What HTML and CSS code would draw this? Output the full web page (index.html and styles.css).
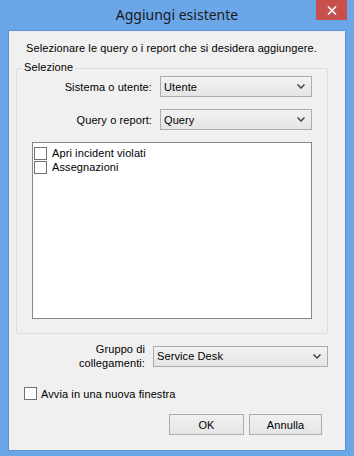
FILE: index.html
```html
<!DOCTYPE html>
<html>
<head>
<meta charset="utf-8">
<link rel="stylesheet" href="styles.css">
</head>
<body>
<div class="window">
  <div class="titlebar">
    <span class="title">Aggiungi esistente</span>
    <span class="close"><svg width="10" height="9" viewBox="0 0 10 9"><path d="M1 0.5 L9 8.5 M9 0.5 L1 8.5" stroke="#fff" stroke-width="1.6" fill="none"/></svg></span>
  </div>
  <div class="client">
    <p class="intro">Selezionare le query o i report che si desidera aggiungere.</p>
    <div class="group">
      <span class="caption">Selezione</span>
      <div class="row">
        <span class="label">Sistema o utente:</span>
        <div class="combo"><span>Utente</span><svg class="arrow" width="8" height="5" viewBox="0 0 8 5"><path d="M0.5 0.5 L4 4 L7.5 0.5" stroke="#444" stroke-width="1.5" fill="none"/></svg></div>
      </div>
      <div class="row">
        <span class="label">Query o report:</span>
        <div class="combo"><span>Query</span><svg class="arrow" width="8" height="5" viewBox="0 0 8 5"><path d="M0.5 0.5 L4 4 L7.5 0.5" stroke="#444" stroke-width="1.5" fill="none"/></svg></div>
      </div>
      <div class="list">
        <div class="item"><span class="cb"></span>Apri incident violati</div>
        <div class="item"><span class="cb"></span>Assegnazioni</div>
      </div>
    </div>
    <div class="row links">
      <span class="label">Gruppo di<br>collegamenti:</span>
      <div class="combo"><span>Service Desk</span><svg class="arrow" width="8" height="5" viewBox="0 0 8 5"><path d="M0.5 0.5 L4 4 L7.5 0.5" stroke="#444" stroke-width="1.5" fill="none"/></svg></div>
    </div>
    <div class="check"><span class="cb"></span>Avvia in una nuova finestra</div>
    <div class="buttons">
      <button class="btn">OK</button>
      <button class="btn cancel">Annulla</button>
    </div>
  </div>
</div>
</body>
</html>
```
FILE: styles.css
```css
html, body {
  margin: 0;
  padding: 0;
}
body {
  width: 354px;
  height: 456px;
  overflow: hidden;
  background: #6aa6e8;
  font-family: "Liberation Sans", Arial, sans-serif;
  font-size: 11px;
  letter-spacing: 0.1px;
  color: #000;
}
.window {
  display: flex;
  flex-direction: column;
  height: 456px;
}
.titlebar {
  position: relative;
  height: 30px;
  display: flex;
  align-items: center;
  justify-content: center;
}
.title {
  font-family: "Noto Sans", sans-serif;
  font-size: 14px;
  letter-spacing: 0;
  color: #1a1a1a;
  margin-top: -1px;
}
.close {
  position: absolute;
  top: 0;
  right: 7px;
  width: 31px;
  height: 20px;
  background: #c7504d;
  display: flex;
  align-items: center;
  justify-content: center;
}
.client {
  margin: 0 8px;
  height: 421px;
  box-sizing: border-box;
  background: #f0f0f0;
  border: 1px solid #5d94d2;
  padding: 0 0 0 7px;
}
.intro {
  margin: 11px 0 0 10px;
  line-height: 13px;
}
.group {
  position: relative;
  margin-top: 13px;
  width: 312px;
  height: 266px;
  box-sizing: border-box;
  border: 1px solid #d5dfe5;
  border-radius: 2px;
  padding: 7px 0 0 15px;
}
.caption {
  position: absolute;
  left: 5px;
  top: -8px;
  padding: 0 2px;
  background: #f0f0f0;
  line-height: 13px;
}
.row {
  display: flex;
  align-items: center;
  margin-bottom: 12px;
}
.label {
  width: 120px;
  text-align: right;
  margin-right: 8px;
  line-height: 14px;
}
.combo {
  position: relative;
  width: 152px;
  height: 21px;
  box-sizing: border-box;
  border: 1px solid #acacac;
  background: linear-gradient(#f2f2f2, #e5e5e5);
  display: flex;
  align-items: center;
  padding-left: 3px;
}
.combo span {
  flex: 1;
}
.arrow {
  margin-right: 6px;
}
.list {
  width: 280px;
  height: 177px;
  box-sizing: border-box;
  border: 1px solid #828790;
  background: #fff;
  padding: 3px 0 0 1px;
}
.item {
  display: flex;
  align-items: center;
  height: 14px;
}
.cb {
  width: 13px;
  height: 13px;
  box-sizing: border-box;
  border: 1px solid #707070;
  background: #fff;
  margin-right: 5px;
}
.links {
  margin: 8px 0 0 0;
}
.links .label {
  width: 129px;
}
.links .combo {
  width: 175px;
}
.check {
  display: flex;
  align-items: center;
  margin: 17px 0 0 8px;
}
.check .cb {
  margin-right: 4px;
}
.buttons {
  display: flex;
  gap: 5px;
  margin: 14px 0 0 153px;
}
.btn {
  width: 75px;
  height: 21px;
  margin: 0;
  padding: 0;
  border: 1px solid #acacac;
  background: linear-gradient(#f0f0f0, #e5e5e5);
  font-family: "Liberation Sans", Arial, sans-serif;
  font-size: 11px;
  letter-spacing: 0.1px;
  color: #000;
}
.cancel {
  width: 73px;
}
```
